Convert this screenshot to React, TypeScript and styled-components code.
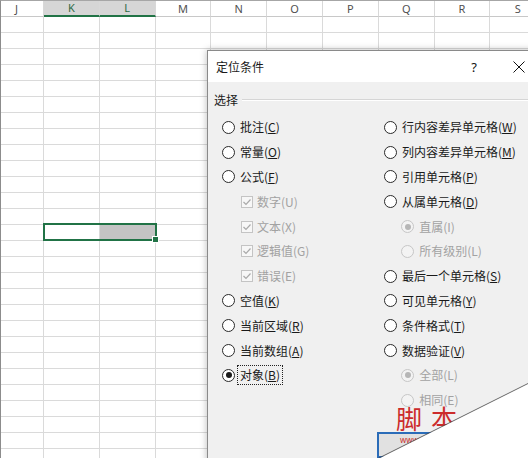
import React from 'react';
import styled, { createGlobalStyle } from 'styled-components';

const Global = createGlobalStyle`
  html, body { margin: 0; padding: 0; overflow: hidden; background: #fff; }
  body { font-family: "Noto Sans CJK SC", "Noto Sans", sans-serif; }
`;

const Root = styled.div`
  position: relative;
  width: 528px;
  height: 458px;
  overflow: hidden;
  background: #fff;
  &::after {
    content: '';
    position: absolute;
    inset: 0;
    border-top: 1px solid #a6a6a6;
    border-left: 1px solid #8c8c8c;
    pointer-events: none;
  }
`;

const Sheet = styled.div`
  display: grid;
  grid-template-columns: 44px repeat(9, 55.8px);
  grid-template-rows: 17px;
  grid-auto-rows: 16px;
`;

const HeadCell = styled.div<{ $sel?: boolean; $shift?: number }>`
  box-sizing: border-box;
  border-right: 1px solid #d8d8d8;
  border-bottom: ${(p) => (p.$sel ? '2px solid #217346' : '1px solid #c8c8c8')};
  background: ${(p) => (p.$sel ? '#d6d6d6' : '#fff')};
  color: ${(p) => (p.$sel ? '#2d6a45' : '#505050')};
  font: 11px "Noto Sans", sans-serif;
  display: flex;
  align-items: center;
  justify-content: center;
  padding-right: ${(p) => p.$shift ?? 0}px;
`;

const Cell = styled.div`
  box-sizing: border-box;
  border-right: 1px solid #dadada;
  border-bottom: 1px solid #dadada;
`;

const Selection = styled.div`
  position: absolute;
  left: 43px;
  top: 223px;
  width: 114px;
  height: 18px;
  box-sizing: border-box;
  border: 2px solid #217346;
  display: grid;
  grid-template-columns: 55px 1fr;
`;

const SelGray = styled.div`
  background: #c4c4c4;
`;

const FillHandle = styled.div`
  position: absolute;
  right: -4px;
  bottom: -4px;
  width: 5px;
  height: 5px;
  background: #217346;
  border: 1px solid #fff;
`;

const Dialog = styled.div`
  position: absolute;
  left: 207px;
  top: 50px;
  width: 330px;
  height: 420px;
  box-sizing: border-box;
  border: 1px solid #8a8a8a;
  background: #f0f0f0;
  box-shadow: 0 0 7px rgba(0, 0, 0, 0.28);
  display: flex;
  flex-direction: column;
  font-family: "Noto Sans CJK SC", "Noto Sans", sans-serif;
  font-size: 12px;
  color: #1a1a1a;
`;

const TitleBar = styled.div`
  flex: none;
  height: 31px;
  background: #fff;
  display: flex;
  align-items: center;
  padding-left: 8px;
`;

const Title = styled.div`
  flex: 1;
  line-height: 16px;
`;

const TitleButton = styled.div<{ $mr?: number }>`
  width: 34px;
  height: 31px;
  display: flex;
  align-items: center;
  justify-content: center;
  margin-right: ${(p) => p.$mr ?? 0}px;
  font: 13px "Noto Sans", sans-serif;
  color: #111;
`;

const Body = styled.div`
  flex: 1;
  padding: 9px 0 0 6px;
  display: flex;
  flex-direction: column;
`;

const GroupHead = styled.div`
  display: flex;
  align-items: center;
  gap: 4px;
  height: 18px;
  line-height: 16px;
`;

const GroupLine = styled.div`
  flex: 1;
  height: 0;
  border-top: 1px solid #d5d5d5;
  border-bottom: 1px solid #fff;
`;

const OptionGrid = styled.div`
  display: grid;
  grid-template-columns: 162px 1fr;
  margin-top: 6px;
  padding-left: 8px;
  align-items: start;
`;

const Column = styled.div`
  display: flex;
  flex-direction: column;
`;

const Row = styled.div<{ $indent?: number }>`
  height: 24.8px;
  display: flex;
  align-items: center;
  padding-left: ${(p) => p.$indent ?? 0}px;
`;

const RadioCircle = styled.span<{ $checked?: boolean; $disabled?: boolean }>`
  flex: none;
  width: 13px;
  height: 13px;
  box-sizing: border-box;
  border-radius: 50%;
  margin-right: 5px;
  border: 1px solid ${(p) => (p.$disabled ? '#c6c6c6' : '#2a2a2a')};
  background: ${(p) => (p.$disabled ? '#f3f3f3' : '#fff')};
  display: flex;
  align-items: center;
  justify-content: center;
  &::after {
    content: '';
    width: 6px;
    height: 6px;
    border-radius: 50%;
    background: ${(p) => (p.$disabled ? '#b6b6b6' : '#1a1a1a')};
    display: ${(p) => (p.$checked ? 'block' : 'none')};
  }
`;

const CheckBox = styled.span`
  flex: none;
  width: 12px;
  height: 12px;
  box-sizing: border-box;
  margin-right: 4.5px;
  border: 1px solid #c4c4c4;
  background: #f7f7f7;
  display: flex;
  align-items: center;
  justify-content: center;
`;

const Label = styled.span<{ $disabled?: boolean; $focus?: boolean }>`
  line-height: 16px;
  white-space: nowrap;
  color: ${(p) => (p.$disabled ? '#a2a2a2' : '#1a1a1a')};
  border: ${(p) => (p.$focus ? '1px dotted #222' : 'none')};
  padding: ${(p) => (p.$focus ? '1px 2px' : '0')};
  margin-left: ${(p) => (p.$focus ? '-3px' : '0')};
`;

const ButtonRow = styled.div`
  margin-top: 19px;
  padding-left: 163px;
  display: flex;
`;

const Button = styled.div`
  width: 120px;
  height: 26px;
  box-sizing: border-box;
  border: 2px solid #2b6cb8;
  background: #e1e1e1;
`;

const Watermark = styled.div`
  position: absolute;
  left: 396px;
  top: 405px;
  font-family: "Noto Sans CJK SC", sans-serif;
  font-size: 26px;
  line-height: 1;
  letter-spacing: 9px;
  color: #cc2b2b;
  white-space: nowrap;
`;

const WatermarkUrl = styled.div`
  position: absolute;
  left: 400px;
  top: 436px;
  font: 8px/8px "Noto Sans", sans-serif;
  color: #c9302c;
  white-space: nowrap;
`;

const Curl = styled.svg`
  position: absolute;
  left: 0;
  top: 0;
  pointer-events: none;
`;

const cols = ['J', 'K', 'L', 'M', 'N', 'O', 'P', 'Q', 'R', 'S'];

type Opt = {
  text: string;
  key?: string;
  kind: 'radio' | 'check' | 'sub';
  checked?: boolean;
  disabled?: boolean;
  focus?: boolean;
};

const left: Opt[] = [
  { text: '批注', key: 'C', kind: 'radio' },
  { text: '常量', key: 'O', kind: 'radio' },
  { text: '公式', key: 'F', kind: 'radio' },
  { text: '数字(U)', kind: 'check', checked: true, disabled: true },
  { text: '文本(X)', kind: 'check', checked: true, disabled: true },
  { text: '逻辑值(G)', kind: 'check', checked: true, disabled: true },
  { text: '错误(E)', kind: 'check', checked: true, disabled: true },
  { text: '空值', key: 'K', kind: 'radio' },
  { text: '当前区域', key: 'R', kind: 'radio' },
  { text: '当前数组', key: 'A', kind: 'radio' },
  { text: '对象', key: 'B', kind: 'radio', checked: true, focus: true },
];

const right: Opt[] = [
  { text: '行内容差异单元格', key: 'W', kind: 'radio' },
  { text: '列内容差异单元格', key: 'M', kind: 'radio' },
  { text: '引用单元格', key: 'P', kind: 'radio' },
  { text: '从属单元格', key: 'D', kind: 'radio' },
  { text: '直属(I)', kind: 'sub', checked: true, disabled: true },
  { text: '所有级别(L)', kind: 'sub', disabled: true },
  { text: '最后一个单元格', key: 'S', kind: 'radio' },
  { text: '可见单元格', key: 'Y', kind: 'radio' },
  { text: '条件格式', key: 'T', kind: 'radio' },
  { text: '数据验证', key: 'V', kind: 'radio' },
  { text: '全部(L)', kind: 'sub', checked: true, disabled: true },
  { text: '相同(E)', kind: 'sub', disabled: true },
];

const CheckMark = () => (
  <svg width="10" height="10" viewBox="0 0 10 10">
    <polyline points="1.5,5 4,7.5 8.5,2.5" fill="none" stroke="#a9a9a9" strokeWidth="1.2" />
  </svg>
);

const Option = ({ o }: { o: Opt }) => (
  <Row $indent={o.kind === 'radio' ? 0 : o.kind === 'check' ? 18.5 : 17.3}>
    {o.kind === 'check' ? (
      <CheckBox>{o.checked && <CheckMark />}</CheckBox>
    ) : (
      <RadioCircle $checked={o.checked} $disabled={o.disabled} />
    )}
    <Label $disabled={o.disabled} $focus={o.focus}>
      {o.text}
      {o.key && (
        <>
          (<u>{o.key}</u>)
        </>
      )}
    </Label>
  </Row>
);

export default function App() {
  const rows = Array.from({ length: 28 });
  return (
    <Root>
      <Global />
      <Sheet>
        {cols.map((c, i) => (
          <HeadCell key={c} $sel={i === 1 || i === 2} $shift={i === 0 ? 10 : 0}>
            {c}
          </HeadCell>
        ))}
        {rows.map((_, r) => cols.map((c) => <Cell key={`${r}-${c}`} />))}
      </Sheet>

      <Selection>
        <div />
        <SelGray />
        <FillHandle />
      </Selection>

      <Dialog>
        <TitleBar>
          <Title>定位条件</Title>
          <TitleButton $mr={11}>?</TitleButton>
          <TitleButton>
            <svg width="12" height="12" viewBox="0 0 12 12">
              <path d="M0.5 0.5 L11.5 11.5 M11.5 0.5 L0.5 11.5" stroke="#111" strokeWidth="1" />
            </svg>
          </TitleButton>
        </TitleBar>
        <Body>
          <GroupHead>
            <span>选择</span>
            <GroupLine />
          </GroupHead>
          <OptionGrid>
            <Column>
              {left.map((o) => (
                <Option key={o.text} o={o} />
              ))}
            </Column>
            <Column>
              {right.map((o) => (
                <Option key={o.text} o={o} />
              ))}
            </Column>
          </OptionGrid>
          <ButtonRow>
            <Button />
          </ButtonRow>
        </Body>
      </Dialog>

      <Watermark>脚本</Watermark>
      <WatermarkUrl>www</WatermarkUrl>

      <Curl width="528" height="458" viewBox="0 0 528 458">
        <polygon points="378,459 528,383.5 528,459" fill="#fff" />
        <line x1="378" y1="458.5" x2="528" y2="383.5" stroke="#444" strokeWidth="0.8" />
      </Curl>
    </Root>
  );
}
